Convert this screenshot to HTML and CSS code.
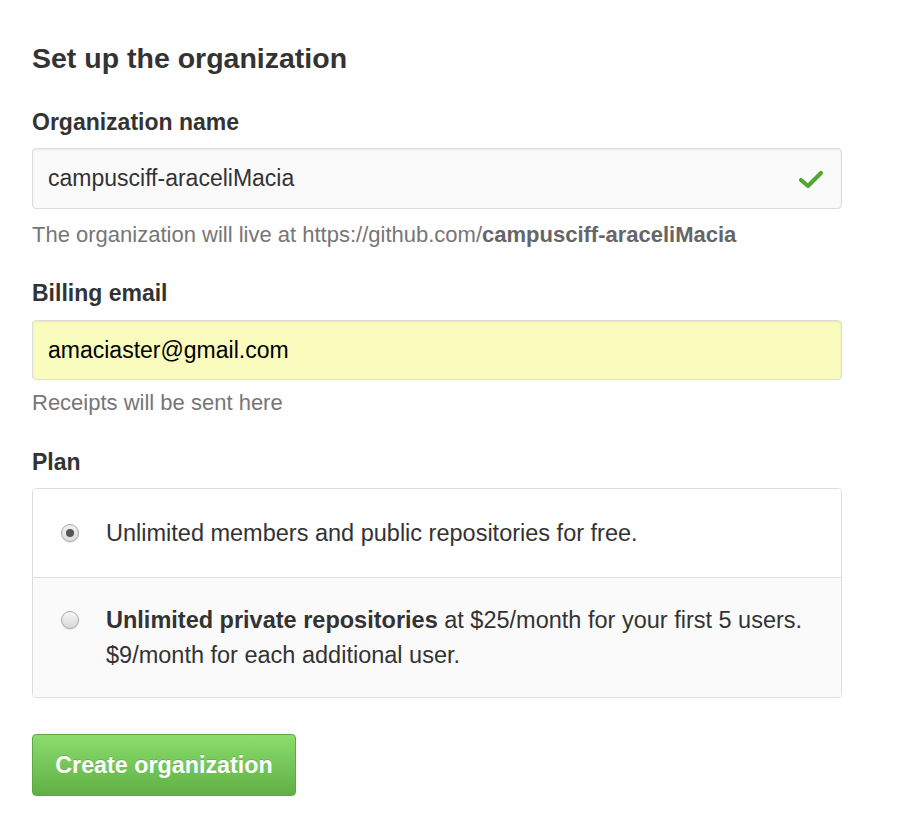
FILE: index.html
```html
<!DOCTYPE html>
<html>
<head>
<meta charset="utf-8">
<link rel="stylesheet" href="styles.css">
</head>
<body>
<form class="setup">
  <h2 class="title">Set up the organization</h2>

  <label class="label label-first">Organization name</label>
  <div class="field field-name">
    <span class="field-value">campusciff-araceliMacia</span>
    <svg class="check" width="26" height="20" viewBox="0 0 26 20"><path d="M3 11 L10 17 L23 4" fill="none" stroke="#55a532" stroke-width="4.2" stroke-linecap="round" stroke-linejoin="round"/></svg>
  </div>
  <p class="note note-first">The organization will live at https://github.com/<strong>campusciff-araceliMacia</strong></p>

  <label class="label label-billing">Billing email</label>
  <div class="field field-email">
    <span class="field-value">amaciaster@gmail.com</span>
  </div>
  <p class="note note-second">Receipts will be sent here</p>

  <label class="label label-plan">Plan</label>
  <div class="plans">
    <div class="plan plan-free">
      <span class="radio radio-on"><span class="dot"></span></span>
      <span class="plan-text">Unlimited members and public repositories for free.</span>
    </div>
    <div class="plan plan-paid">
      <span class="radio"></span>
      <span class="plan-text"><strong>Unlimited private repositories</strong> at $25/month for your first 5 users.<br>$9/month for each additional user.</span>
    </div>
  </div>

  <button type="button" class="btn">Create organization</button>
</form>
</body>
</html>
```

FILE: styles.css
```css
html, body {
  margin: 0;
  padding: 0;
  background: #fff;
}
body {
  font-family: "Liberation Sans", Arial, Helvetica, sans-serif;
  color: #333;
}
.setup {
  display: flex;
  flex-direction: column;
  align-items: flex-start;
  padding: 42px 0 0 32px;
  width: 810px;
}
.title {
  margin: 0;
  font-size: 28.5px;
  line-height: 32px;
  font-weight: bold;
  color: #333;
}
.label {
  display: block;
  font-size: 23px;
  line-height: 24px;
  font-weight: bold;
  color: #333;
}
.label-first { margin-top: 36px; }
.label-billing { margin-top: 34px; }
.label-plan { margin-top: 35px; }
.field {
  box-sizing: border-box;
  width: 810px;
  height: 61px;
  margin-top: 14px;
  border: 1px solid #dcdcdc;
  border-radius: 4px;
  background: #fafafa;
  box-shadow: inset 0 1px 2px rgba(0,0,0,0.075);
  display: flex;
  align-items: center;
  justify-content: space-between;
  padding: 0 17px 0 15px;
  font-size: 23px;
  color: #333;
}
.field-email {
  background: #f9fcbd;
  color: #000;
  margin-top: 15px;
  height: 60px;
}
.check {
  display: block;
}
.note {
  font-size: 22px;
  line-height: 24px;
  color: #767676;
}
.note-first { margin: 14px 0 0; }
.note-second { margin: 11px 0 0; }
.note strong { color: #666; }
.plans {
  box-sizing: border-box;
  width: 810px;
  margin-top: 14px;
  border: 1px solid #ddd;
  border-radius: 4px;
  overflow: hidden;
}
.plan {
  display: flex;
  align-items: flex-start;
  padding: 0 20px 0 28px;
  font-size: 23.5px;
  line-height: 35px;
  color: #333;
}
.plan-free {
  background: #fff;
  padding-top: 27px;
  padding-bottom: 26px;
  border-bottom: 1px solid #ddd;
}
.plan-paid {
  background: #fafafa;
  padding-top: 25px;
  padding-bottom: 24px;
}
.radio {
  flex: none;
  box-sizing: border-box;
  width: 18px;
  height: 18px;
  margin: 8px 27px 0 0;
  border-radius: 50%;
  border: 1px solid #aaa;
  background: linear-gradient(#f6f6f6, #d8d8d8);
  box-shadow: 0 1px 1px rgba(0,0,0,0.1);
  display: flex;
  align-items: center;
  justify-content: center;
}
.radio-on {
  background: linear-gradient(#f0f0f0, #dedede);
}
.dot {
  width: 8px;
  height: 8px;
  border-radius: 50%;
  background: #555;
}
.plan-text strong { color: #333; }
.btn {
  margin-top: 36px;
  box-sizing: border-box;
  width: 264px;
  height: 62px;
  border: 1px solid #5ca941;
  border-radius: 4px;
  background: linear-gradient(#8add6d, #60b044);
  color: #fff;
  font-family: "Liberation Sans", Arial, Helvetica, sans-serif;
  font-size: 23.3px;
  font-weight: bold;
  text-shadow: 0 -1px 0 rgba(0,0,0,0.15);
  padding: 0;
  cursor: pointer;
}
```
